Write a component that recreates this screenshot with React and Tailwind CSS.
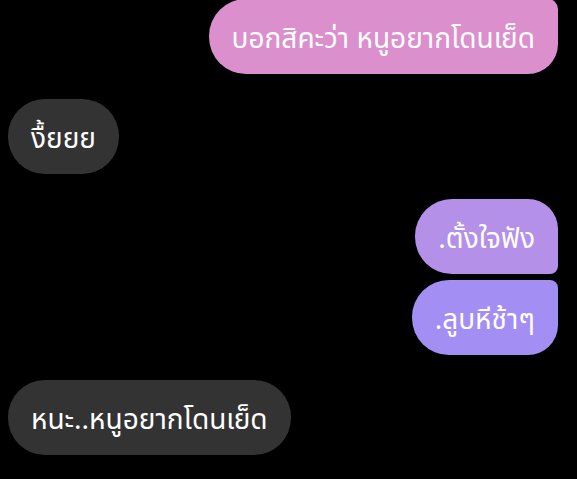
const MESSAGES = [
  { text: 'บอกสิคะว่า หนูอยากโดนเย็ด', me: true, cls: 'bg-[#db8fcd] rounded-tl-[37px] rounded-bl-[37px] rounded-tr-[10px] rounded-br-[30px]', gap: '-mt-px' },
  { text: 'งื้ยยย', me: false, cls: 'bg-[#333333] rounded-[37px]', gap: 'mt-[25px]' },
  { text: '.ตั้งใจฟัง', me: true, cls: 'bg-[#b590e8] rounded-tl-[37px] rounded-bl-[37px] rounded-tr-[30px] rounded-br-[8px]', gap: 'mt-[25px]' },
  { text: '.ลูบหีช้าๆ', me: true, cls: 'bg-[#a38ef4] rounded-tl-[37px] rounded-bl-[37px] rounded-tr-[8px] rounded-br-[30px]', gap: 'mt-[6px]' },
  { text: 'หนะ..หนูอยากโดนเย็ด', me: false, cls: 'bg-[#333333] rounded-[37px]', gap: 'mt-[25px]' },
]

export default function App() {
  return (
    <div
      className="w-[577px] h-[479px] bg-black overflow-hidden flex flex-col pl-[8px] pr-[19px]"
      style={{ fontFamily: '"Noto Sans", "Noto Sans Thai", "Liberation Sans", sans-serif' }}
    >
      {MESSAGES.map((m, i) => (
        <div key={i} className={`flex ${m.me ? 'justify-end' : 'justify-start'} ${m.gap}`}>
          <div className={`${m.cls} h-[75px] px-[23px] flex items-center text-white text-[28px] leading-none`}>
            {m.text}
          </div>
        </div>
      ))}
    </div>
  )
}
